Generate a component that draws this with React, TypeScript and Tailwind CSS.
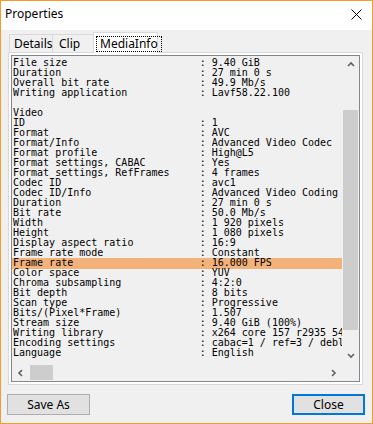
const rows: { k: string; v?: string; hi?: boolean }[] = [
  { k: "File size", v: "9.40 GiB" },
  { k: "Duration", v: "27 min 0 s" },
  { k: "Overall bit rate", v: "49.9 Mb/s" },
  { k: "Writing application", v: "Lavf58.22.100" },
  { k: "" },
  { k: "Video" },
  { k: "ID", v: "1" },
  { k: "Format", v: "AVC" },
  { k: "Format/Info", v: "Advanced Video Codec" },
  { k: "Format profile", v: "High@L5" },
  { k: "Format settings, CABAC", v: "Yes" },
  { k: "Format settings, RefFrames", v: "4 frames" },
  { k: "Codec ID", v: "avc1" },
  { k: "Codec ID/Info", v: "Advanced Video Coding" },
  { k: "Duration", v: "27 min 0 s" },
  { k: "Bit rate", v: "50.0 Mb/s" },
  { k: "Width", v: "1 920 pixels" },
  { k: "Height", v: "1 080 pixels" },
  { k: "Display aspect ratio", v: "16:9" },
  { k: "Frame rate mode", v: "Constant" },
  { k: "Frame rate", v: "16.000 FPS", hi: true },
  { k: "Color space", v: "YUV" },
  { k: "Chroma subsampling", v: "4:2:0" },
  { k: "Bit depth", v: "8 bits" },
  { k: "Scan type", v: "Progressive" },
  { k: "Bits/(Pixel*Frame)", v: "1.507" },
  { k: "Stream size", v: "9.40 GiB (100%)" },
  { k: "Writing library", v: "x264 core 157 r2935 545de2f" },
  { k: "Encoding settings", v: "cabac=1 / ref=3 / deblock=1:0:0 / analyse=0x3:0x113" },
  { k: "Language", v: "English" },
];

const line = (r: { k: string; v?: string }) =>
  r.v === undefined ? r.k || " " : r.k.padEnd(31, " ") + ": " + r.v;

function Chevron({ dir }: { dir: "up" | "down" | "left" | "right" }) {
  const d = {
    up: "M1 5 L4 2 L7 5",
    down: "M1 2 L4 5 L7 2",
    left: "M5 1 L2 4 L5 7",
    right: "M2 1 L5 4 L2 7",
  }[dir];
  const vert = dir === "up" || dir === "down";
  return (
    <svg width={vert ? 8 : 7} height={vert ? 7 : 8} viewBox={vert ? "0 0 8 7" : "0 0 7 8"}>
      <path d={d} fill="none" stroke="#606060" strokeWidth="1.6" />
    </svg>
  );
}

export default function App() {
  return (
    <div
      className="w-[373px] h-[424px] border border-[#f89c28] bg-[#f0f0f0] flex flex-col text-black"
      style={{ fontFamily: '"Segoe UI", "Noto Sans", sans-serif' }}
    >
      {/* title bar */}
      <div className="h-[29px] bg-white flex items-center justify-between pl-[4px] pr-[10px] pb-[3px] shrink-0">
        <span className="text-[12px]">Properties</span>
        <svg width="11" height="11" viewBox="0 0 11 11">
          <path d="M0.5 0.5 L10.5 10.5 M10.5 0.5 L0.5 10.5" stroke="#000" strokeWidth="1" />
        </svg>
      </div>

      {/* tabs */}
      <div className="mt-[2px] h-[20px] flex items-end pl-[8px] text-[12px] shrink-0">
        <div className="h-[18px] w-[44px] border border-b-0 border-[#d9d9d9] flex items-center pl-[4px]">
          Details
        </div>
        <div className="h-[18px] w-[41px] border border-l-0 border-b-0 border-[#d9d9d9] flex items-center pl-[6px]">
          Clip
        </div>
        <div className="relative z-10 -ml-px -mb-px h-[21px] w-[65px] bg-white border border-b-0 border-[#d9d9d9] flex items-start pt-[3px] pl-[2px]">
          <span className="border border-dotted border-black px-[3px] leading-[14px]">MediaInfo</span>
        </div>
      </div>

      {/* tab page */}
      <div className="ml-[7px] w-[355px] h-[333px] border border-[#d9d9d9] bg-white p-[2px] shrink-0">
        <div className="w-[349px] h-[327px] border border-[#828790] bg-[#f0f0f0] flex flex-col">
          <div className="flex h-[308px]">
            <div
              className="w-[330px] overflow-hidden pt-[2px] text-[10px] leading-[10px] whitespace-pre"
              style={{ fontFamily: '"DejaVu Sans Mono", "Liberation Mono", monospace' }}
            >
              {rows.map((r, i) => (
                <div key={i} className={`pl-[1px] h-[10px] ${r.hi ? "bg-[#f3b27a] shadow-[0_1px_0_#f3b27a]" : ""}`}>
                  {line(r)}
                </div>
              ))}
            </div>
            <div className="w-[17px] flex flex-col">
              <div className="h-[17px] flex items-center justify-center">
                <Chevron dir="up" />
              </div>
              <div className="h-[37px]" />
              <div className="h-[220px] mx-[1px] bg-[#cdcdcd]" />
              <div className="flex-1" />
              <div className="h-[17px] flex items-center justify-center">
                <Chevron dir="down" />
              </div>
            </div>
          </div>
          <div className="flex h-[17px]">
            <div className="w-[330px] flex items-center">
              <div className="w-[17px] h-[17px] flex items-center justify-center">
                <Chevron dir="left" />
              </div>
              <div className="w-[23px] h-[15px] ml-[1px] bg-[#cdcdcd]" />
              <div className="flex-1" />
              <div className="w-[17px] h-[17px] flex items-center justify-center">
                <Chevron dir="right" />
              </div>
            </div>
            <div className="w-[17px]" />
          </div>
        </div>
      </div>

      {/* buttons */}
      <div className="mt-[9px] flex justify-between text-[12px] shrink-0">
        <button className="ml-[6px] w-[83px] h-[21px] bg-[#e1e1e1] border border-[#adadad] flex items-center justify-center">
          Save As
        </button>
        <button className="mr-[7px] w-[73px] h-[21px] bg-[#e1e1e1] border-2 border-[#0078d7] flex items-center justify-center">
          Close
        </button>
      </div>
    </div>
  );
}
